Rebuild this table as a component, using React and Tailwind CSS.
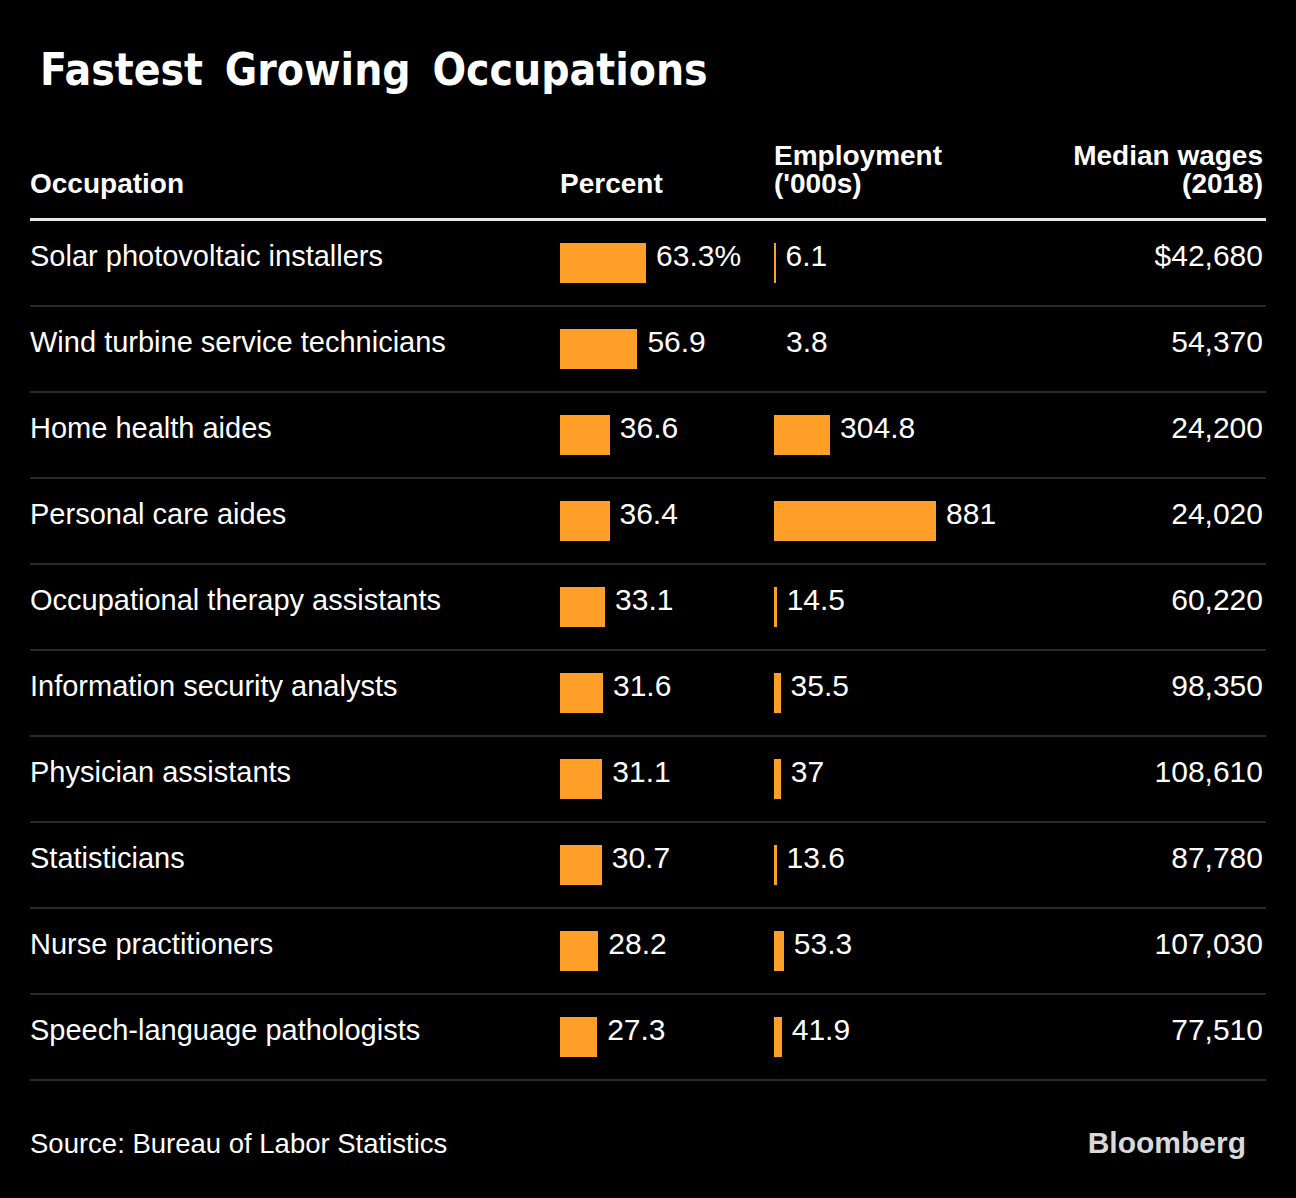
import React from "react";

const rows = [
  ["Solar photovoltaic installers", 63.3, "63.3%", 6.1, "6.1", "$42,680"],
  ["Wind turbine service technicians", 56.9, "56.9", 3.8, "3.8", "54,370"],
  ["Home health aides", 36.6, "36.6", 304.8, "304.8", "24,200"],
  ["Personal care aides", 36.4, "36.4", 881, "881", "24,020"],
  ["Occupational therapy assistants", 33.1, "33.1", 14.5, "14.5", "60,220"],
  ["Information security analysts", 31.6, "31.6", 35.5, "35.5", "98,350"],
  ["Physician assistants", 31.1, "31.1", 37, "37", "108,610"],
  ["Statisticians", 30.7, "30.7", 13.6, "13.6", "87,780"],
  ["Nurse practitioners", 28.2, "28.2", 53.3, "53.3", "107,030"],
  ["Speech-language pathologists", 27.3, "27.3", 41.9, "41.9", "77,510"],
];

const sans = { fontFamily: '"Liberation Sans", Arial, sans-serif' };

export default function App() {
  return (
    <div className="w-[1296px] h-[1198px] bg-black text-white overflow-hidden" style={sans}>
      <div className="px-[30px] pt-[45px]">
        <h1
          className="ml-[10px] text-[44px] leading-[50px] font-bold text-white [word-spacing:8px]"
          style={{ fontFamily: '"DejaVu Sans Condensed", "DejaVu Sans", sans-serif' }}
        >
          Fastest Growing Occupations
        </h1>

        <div className="mt-[47px] grid grid-cols-[530px_214px_1fr_auto] items-end text-[28px] leading-[28px] font-bold pb-[20px] border-b-[3px] border-[#e6e6e6]">
          <div>Occupation</div>
          <div>Percent</div>
          <div>
            Employment
            <br />
            ('000s)
          </div>
          <div className="text-right pr-[3px]">
            Median wages
            <br />
            (2018)
          </div>
        </div>

        <div>
          {rows.map(([name, pct, pctLabel, emp, empLabel, wage]) => (
            <div
              key={name}
              className="h-[86px] grid grid-cols-[530px_214px_1fr_auto] items-start pt-[19px] border-b-2 border-[#2c2829]"
            >
              <div className="text-[29px] leading-[32px]">{name}</div>
              <div className="flex items-start">
                <div className="h-[40px] mt-[3px] bg-[#ff9f27] shrink-0" style={{ width: `${pct * 1.36}px` }} />
                <div className="ml-[10px] text-[30px] leading-[32px]">{pctLabel}</div>
              </div>
              <div className="flex items-start">
                <div
                  className="h-[40px] mt-[3px] bg-[#ff9f27] shrink-0"
                  style={{ width: `${emp < 4 ? 0 : Math.max(emp * 0.184, 1.5)}px` }}
                />
                <div className={emp < 4 ? "ml-[12px] text-[30px] leading-[32px]" : "ml-[10px] text-[30px] leading-[32px]"}>
                  {empLabel}
                </div>
              </div>
              <div className="text-right pr-[3px] text-[30px] leading-[32px]">{wage}</div>
            </div>
          ))}
        </div>

        <div className="mt-[46px] flex items-baseline justify-between pr-[20px]">
          <div className="text-[27.5px] leading-[32px]">Source: Bureau of Labor Statistics</div>
          <div className="text-[30px] leading-[32px] font-bold text-[#d9d9d9]">Bloomberg</div>
        </div>
      </div>
    </div>
  );
}
